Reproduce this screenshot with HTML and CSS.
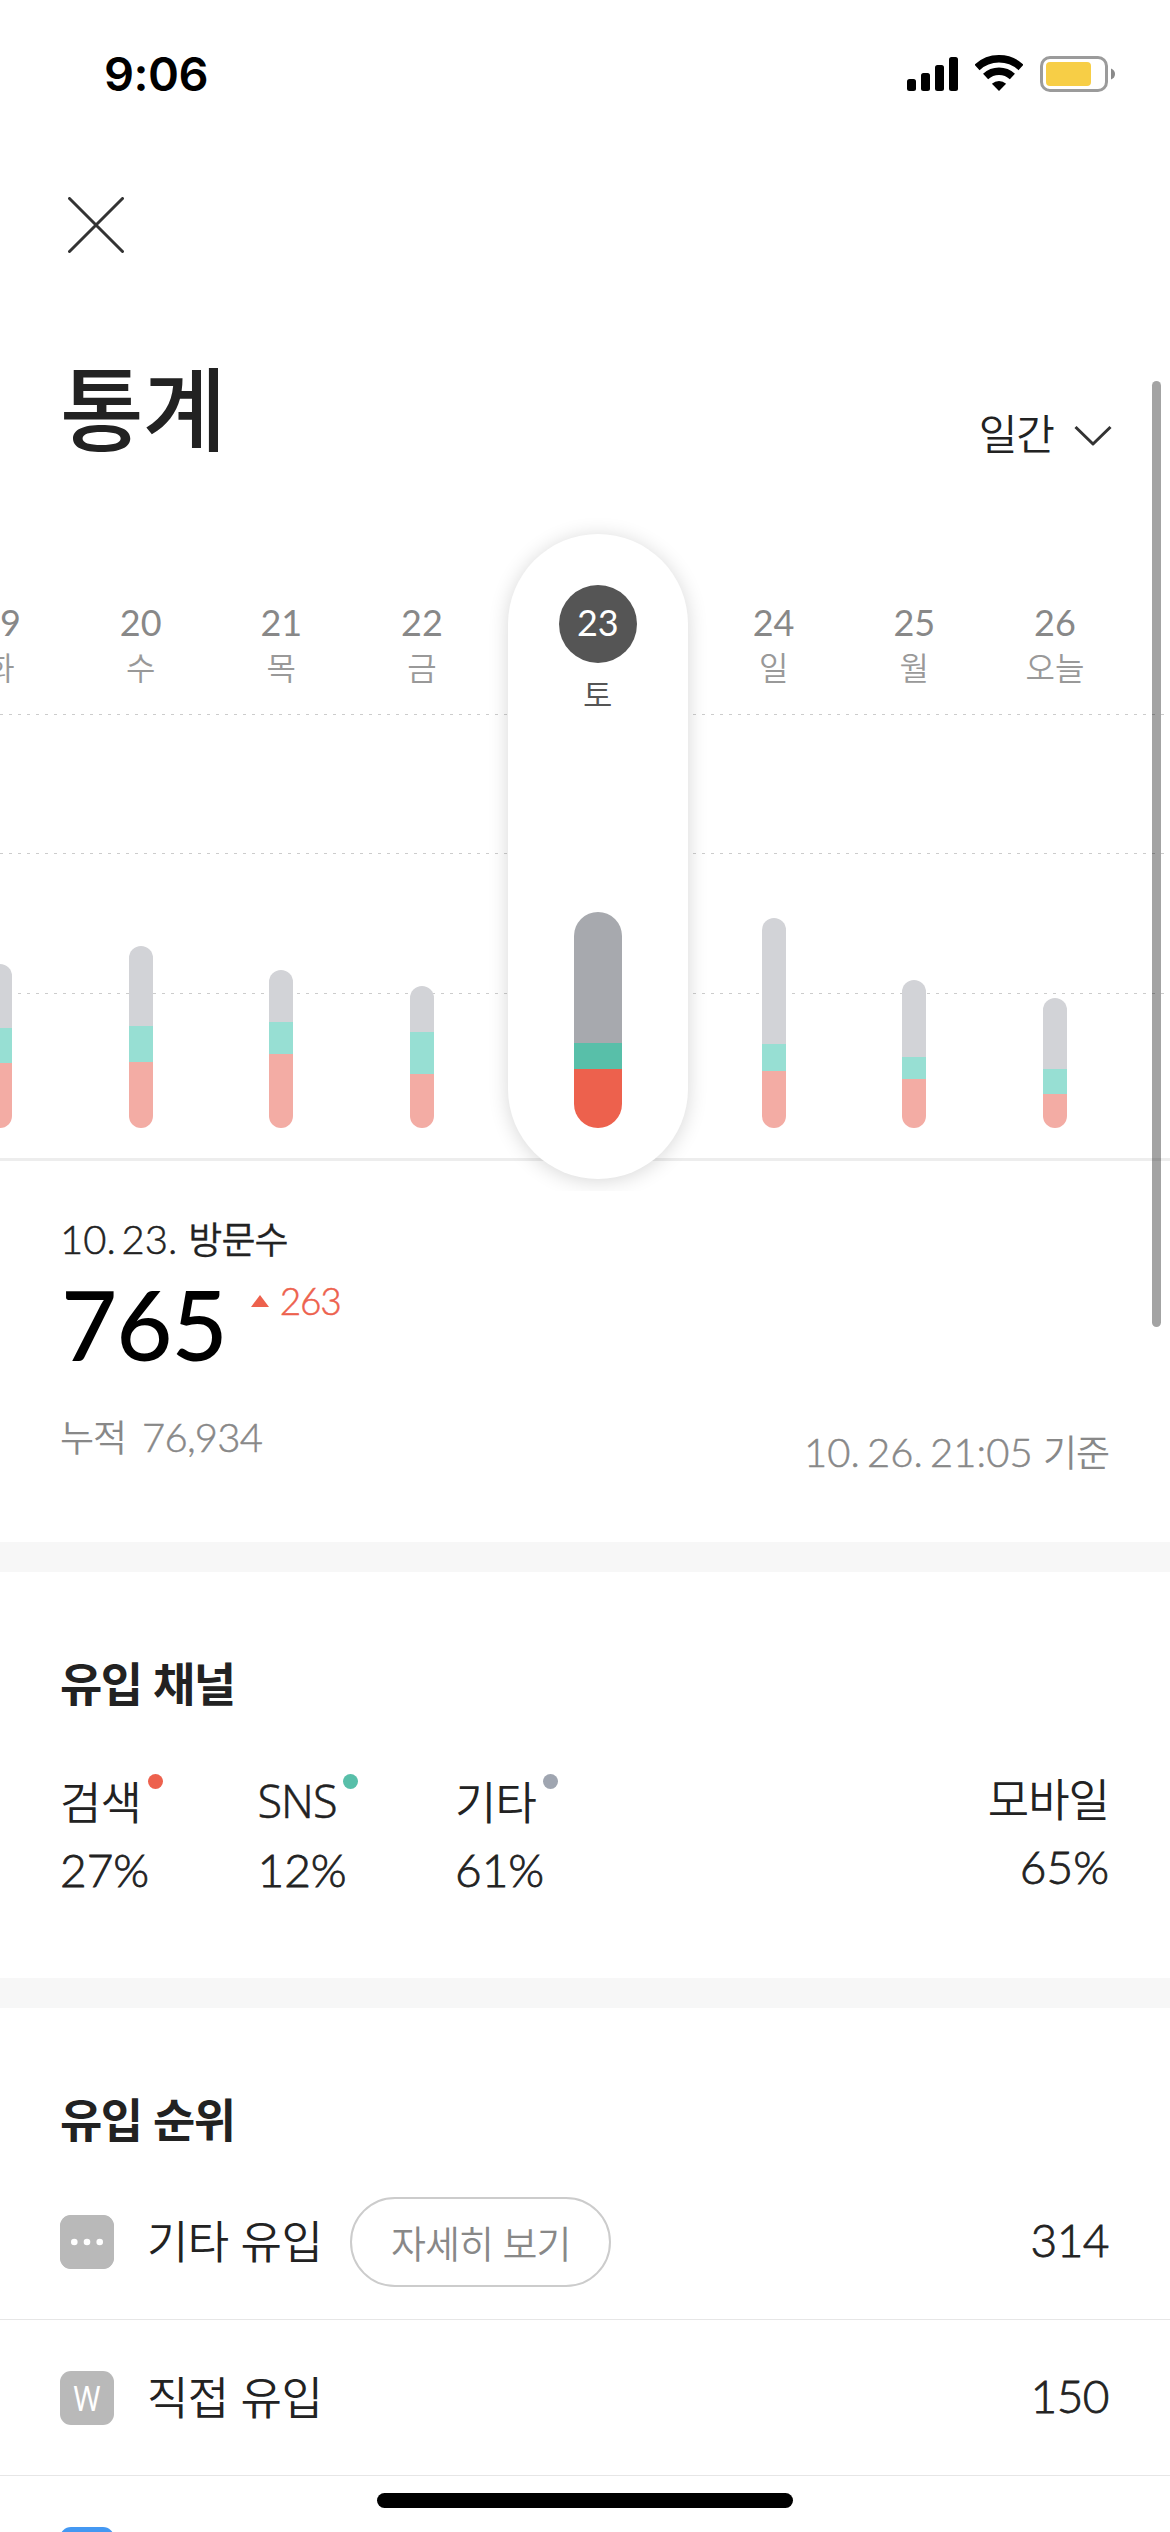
FILE: index.html
```html
<!DOCTYPE html>
<html lang="ko">
<head>
<meta charset="utf-8">
<title>통계</title>
<link rel="stylesheet" href="styles.css">
</head>
<body>
<header class="status">
  <span class="time">9:06</span>
  <span class="status-icons">
    <svg class="signal" width="51" height="34" viewBox="0 0 51 34"><rect x="0" y="22" width="9" height="12" rx="2.5"/><rect x="14" y="16" width="9" height="18" rx="2.5"/><rect x="28" y="8" width="9" height="26" rx="2.5"/><rect x="42" y="0" width="9" height="34" rx="2.5"/></svg>
    <svg class="wifi" width="48" height="37" viewBox="0 0 48 37"><path d="M2 12.4A32.3 32.3 0 0 1 46 12.4M10.6 21.6A19.7 19.7 0 0 1 37.4 21.6" fill="none" stroke="#000" stroke-width="7.5"/><path d="M24 36L16.9 28.7A10.7 10.7 0 0 1 31.1 28.7Z"/></svg>
    <svg class="battery" width="76" height="36" viewBox="0 0 76 36"><rect x="1.5" y="1.5" width="65" height="33" rx="8.5" fill="none" stroke="#9b9b9b" stroke-width="3"/><rect x="6" y="6" width="45" height="24" rx="4" fill="#f7ce46"/><path d="M71 12.5Q75 14 75 18T71 23.5Z" fill="#8a8a8a"/></svg>
  </span>
</header>
<nav class="nav">
  <svg width="56" height="56" viewBox="0 0 56 56"><path d="M1.5 1.5L54.5 54.5M54.5 1.5L1.5 54.5" fill="none" stroke="#333" stroke-width="3" stroke-linecap="round"/></svg>
</nav>
<div class="heading">
  <h1>통계</h1>
  <div class="period"><span>일간</span><svg width="38" height="22" viewBox="0 0 38 22"><path d="M1.5 2L19 19L36.5 2" fill="none" stroke="#333" stroke-width="3" stroke-linejoin="round"/></svg></div>
</div>
<section class="chart">
  <div class="col"><b class="date">19</b><span class="day">화</span><div class="bar"><i class="etc" style="height:64px"></i><i class="sns" style="height:35px"></i><i class="search" style="height:65px"></i></div></div>
  <div class="col"><b class="date">20</b><span class="day">수</span><div class="bar"><i class="etc" style="height:80px"></i><i class="sns" style="height:36px"></i><i class="search" style="height:66px"></i></div></div>
  <div class="col"><b class="date">21</b><span class="day">목</span><div class="bar"><i class="etc" style="height:52px"></i><i class="sns" style="height:32px"></i><i class="search" style="height:74px"></i></div></div>
  <div class="col"><b class="date">22</b><span class="day">금</span><div class="bar"><i class="etc" style="height:46px"></i><i class="sns" style="height:42px"></i><i class="search" style="height:54px"></i></div></div>
  <div class="col selected"><b class="date">23</b><span class="day">토</span><div class="bar"><i class="etc" style="height:131px"></i><i class="sns" style="height:26px"></i><i class="search" style="height:59px"></i></div></div>
  <div class="col"><b class="date">24</b><span class="day">일</span><div class="bar"><i class="etc" style="height:126px"></i><i class="sns" style="height:27px"></i><i class="search" style="height:57px"></i></div></div>
  <div class="col"><b class="date">25</b><span class="day">월</span><div class="bar"><i class="etc" style="height:77px"></i><i class="sns" style="height:22px"></i><i class="search" style="height:49px"></i></div></div>
  <div class="col"><b class="date">26</b><span class="day">오늘</span><div class="bar"><i class="etc" style="height:71px"></i><i class="sns" style="height:25px"></i><i class="search" style="height:34px"></i></div></div>
</section>
<section class="summary">
  <div class="visits">
    <div class="label"><span class="num">10. 23.</span><span class="ko">방문수</span></div>
    <div class="count"><strong>765</strong><span class="delta"><svg width="18" height="12" viewBox="0 0 18 12"><path d="M9 0L18 12H0Z" fill="#ed614d"/></svg>263</span></div>
    <div class="total"><span class="ko">누적</span><span class="num">76,934</span></div>
  </div>
  <div class="asof"><span class="num">10. 26. 21:05</span><span class="ko">기준</span></div>
</section>
<section class="channels">
  <h2>유입 채널</h2>
  <div class="channel-row">
    <div class="channel"><div class="name">검색<i class="dot search-dot"></i></div><div class="pct">27%</div></div>
    <div class="channel"><div class="name latin">SNS<i class="dot sns-dot"></i></div><div class="pct">12%</div></div>
    <div class="channel"><div class="name">기타<i class="dot etc-dot"></i></div><div class="pct">61%</div></div>
    <div class="channel mobile"><div class="name">모바일</div><div class="pct">65%</div></div>
  </div>
</section>
<section class="ranking">
  <h2>유입 순위</h2>
  <ul>
    <li><svg class="badge" width="54" height="54" viewBox="0 0 54 54"><rect width="54" height="54" rx="11" fill="#b9b9b9"/><g fill="#fff"><circle cx="14.3" cy="27" r="3.3"/><circle cx="27" cy="27" r="3.3"/><circle cx="39.7" cy="27" r="3.3"/></g></svg><span class="source">기타 유입</span><button>자세히 보기</button><span class="value">314</span></li>
    <li><span class="badge"><span class="letter">W</span></span><span class="source">직접 유입</span><span class="value">150</span></li>
    <li><span class="badge blue"></span></li>
  </ul>
</section>
<div class="scrollbar"></div>
<div class="home"></div>
</body>
</html>
```

FILE: styles.css
```css
* { box-sizing: border-box; }
body {
  position: relative;
  margin: 0;
  width: 1170px;
  height: 2532px;
  overflow: hidden;
  background: #fff;
  color: #222;
  font-family: "Noto Sans CJK KR", sans-serif;
  font-weight: 350;
}
h1, h2, ul { margin: 0; padding: 0; }
i { font-style: normal; }

.status { display: flex; justify-content: space-between; height: 150px; padding: 0 54px 0 104px; }
.time { margin-top: 44px; font: 600 47px/60px Inter, sans-serif; letter-spacing: -0.5px; color: #000; }
.status-icons { display: flex; align-items: flex-start; padding-top: 55px; }
.signal { margin: 2px 17px 0 0; }
.battery { margin: 1px 0 0 17px; }

.nav { height: 150px; padding: 47px 0 0 68px; }
.nav svg { display: block; }

.heading { display: flex; justify-content: space-between; height: 210px; padding: 0 58px 0 60px; }
h1 { margin-top: 44px; font-size: 91px; font-weight: 500; line-height: 120px; letter-spacing: -1px; }
.period { display: flex; align-items: flex-start; padding-top: 102px; font-size: 42px; line-height: 60px; letter-spacing: -1px; }
.period svg { margin: 23px 0 0 20px; }

.chart {
  display: flex;
  height: 681px;
  padding-top: 24px;
  overflow: hidden;
  background:
    repeating-linear-gradient(to right, #ccc 0 3px, transparent 3px 9px) 0 204px / 100% 1px no-repeat,
    repeating-linear-gradient(to right, #ccc 0 3px, transparent 3px 9px) 0 343px / 100% 1px no-repeat,
    repeating-linear-gradient(to right, #ccc 0 3px, transparent 3px 9px) 0 483px / 100% 1px no-repeat,
    linear-gradient(#ededed, #ededed) 0 648px / 100% 3px no-repeat;
}
.col { display: flex; flex: 0 0 140.67px; flex-direction: column; align-items: center; height: 645px; padding: 68px 0 51px; }
.col:first-child { margin-left: -70.33px; }
.date { font: 400 36px/40px Lato, sans-serif; color: #888; }
.day { font-size: 32px; line-height: 40px; margin-top: 4px; color: #999; }
.bar { display: flex; flex-direction: column; width: 24px; margin-top: auto; border-radius: 24px; overflow: hidden; }
.etc { background: #d2d3d7; }
.sns { background: #97dfd3; }
.search { background: #f3aca4; }
.selected { flex-basis: 180px; margin: 0 15.5px; padding-top: 51px; border-radius: 90px; background: #fff; box-shadow: 0 2px 20px rgba(0, 0, 0, 0.16); }
.selected .date { width: 78px; height: 78px; border-radius: 50%; background: #555; color: #fff; line-height: 74px; text-align: center; }
.selected .day { margin-top: 10px; color: #555; }
.selected .bar { width: 48px; }
.selected .etc { background: #a7a9ae; }
.selected .sns { background: #58bfa9; }
.selected .search { background: #ed614d; }

.num, .pct, .value, .delta { font-family: Lato, sans-serif; font-weight: 300; -webkit-text-stroke: 0.5px; }
.summary { display: flex; justify-content: space-between; height: 351px; padding: 22px 61px 0 60px; }
.label { display: flex; align-items: baseline; gap: 11px; height: 52px; font-size: 40px; line-height: 50px; }
.num { word-spacing: -5px; }
.label .ko { font-size: 37px; letter-spacing: -1px; -webkit-text-stroke: 0.3px; }
.count { display: flex; align-items: flex-start; height: 120px; }
.count strong { margin: 9px 0 0 1px; font: 500 97px/100px Lato, sans-serif; letter-spacing: -1px; color: #000; }
.delta { display: flex; align-items: center; gap: 11px; margin: 13px 0 0 24px; font-size: 37px; line-height: 46px; letter-spacing: -1.2px; color: #ed614d; }
.total { display: flex; align-items: baseline; gap: 16px; margin-top: 26px; font-size: 40px; line-height: 50px; color: #888; }
.total .num { letter-spacing: -0.8px; }
.total .ko, .asof .ko { font-size: 37px; letter-spacing: -1px; }
.asof { display: flex; align-items: baseline; align-self: flex-end; gap: 10px; margin-bottom: 65px; font-size: 40px; line-height: 50px; color: #888; }
.asof .num { letter-spacing: 0.1px; word-spacing: -4px; }

.channels, .ranking { border-top: 30px solid #f7f7f7; }
.channels { height: 436px; }
h2 { padding: 79px 0 0 60px; font-size: 46px; font-weight: 700; line-height: 60px; letter-spacing: -1.5px; }
.channel-row { display: flex; padding: 57px 61px 0 60px; }
.channel { width: 197.5px; }
.name { display: flex; height: 69px; font-size: 45px; line-height: 66px; letter-spacing: -1px; }
.latin { font-family: "Noto Sans", sans-serif; font-weight: 300; -webkit-text-stroke: 0.4px; }
.dot { width: 15px; height: 15px; margin: 6px 0 0 7px; border-radius: 50%; }
.search-dot { background: #ed614d; }
.sns-dot { background: #58bfa9; }
.etc-dot { background: #9fa5b0; }
.pct { font-size: 46px; line-height: 66px; -webkit-text-stroke: 0.8px; }
.mobile { display: flex; flex-direction: column; align-items: flex-end; margin: -3px 0 0 auto; }

.ranking ul { list-style: none; margin-top: 17px; }
.ranking li { display: flex; align-items: center; height: 156px; padding: 0 61px 0 60px; border-bottom: 1px solid #e6e6e6; }
.badge { flex: none; width: 54px; height: 54px; border-radius: 11px; background: #b9b9b9; text-align: center; }
.letter { display: block; color: #fff; font: 400 34px/54px "Noto Sans", sans-serif; transform: scaleX(0.85); }
.blue { background: #4498f2; }
.source { margin: -4px 0 0 33px; font-size: 45px; line-height: 66px; letter-spacing: -0.6px; }
button { width: 261px; height: 90px; margin: 0 0 0 28px; padding: 0; border: 2px solid #ccc; border-radius: 45px; background: #fff; color: #888; font: 350 38px/84px "Noto Sans CJK KR", sans-serif; letter-spacing: -1px; }
.value { margin: -5px 0 0 auto; font-size: 46px; letter-spacing: -0.5px; -webkit-text-stroke: 0.8px; }

.scrollbar { position: absolute; top: 381px; left: 1152px; width: 9px; height: 946px; border-radius: 5px; background: rgba(0, 0, 0, 0.36); }
.home { position: absolute; top: 2493px; left: 377px; width: 416px; height: 15px; border-radius: 8px; background: #000; }
```
